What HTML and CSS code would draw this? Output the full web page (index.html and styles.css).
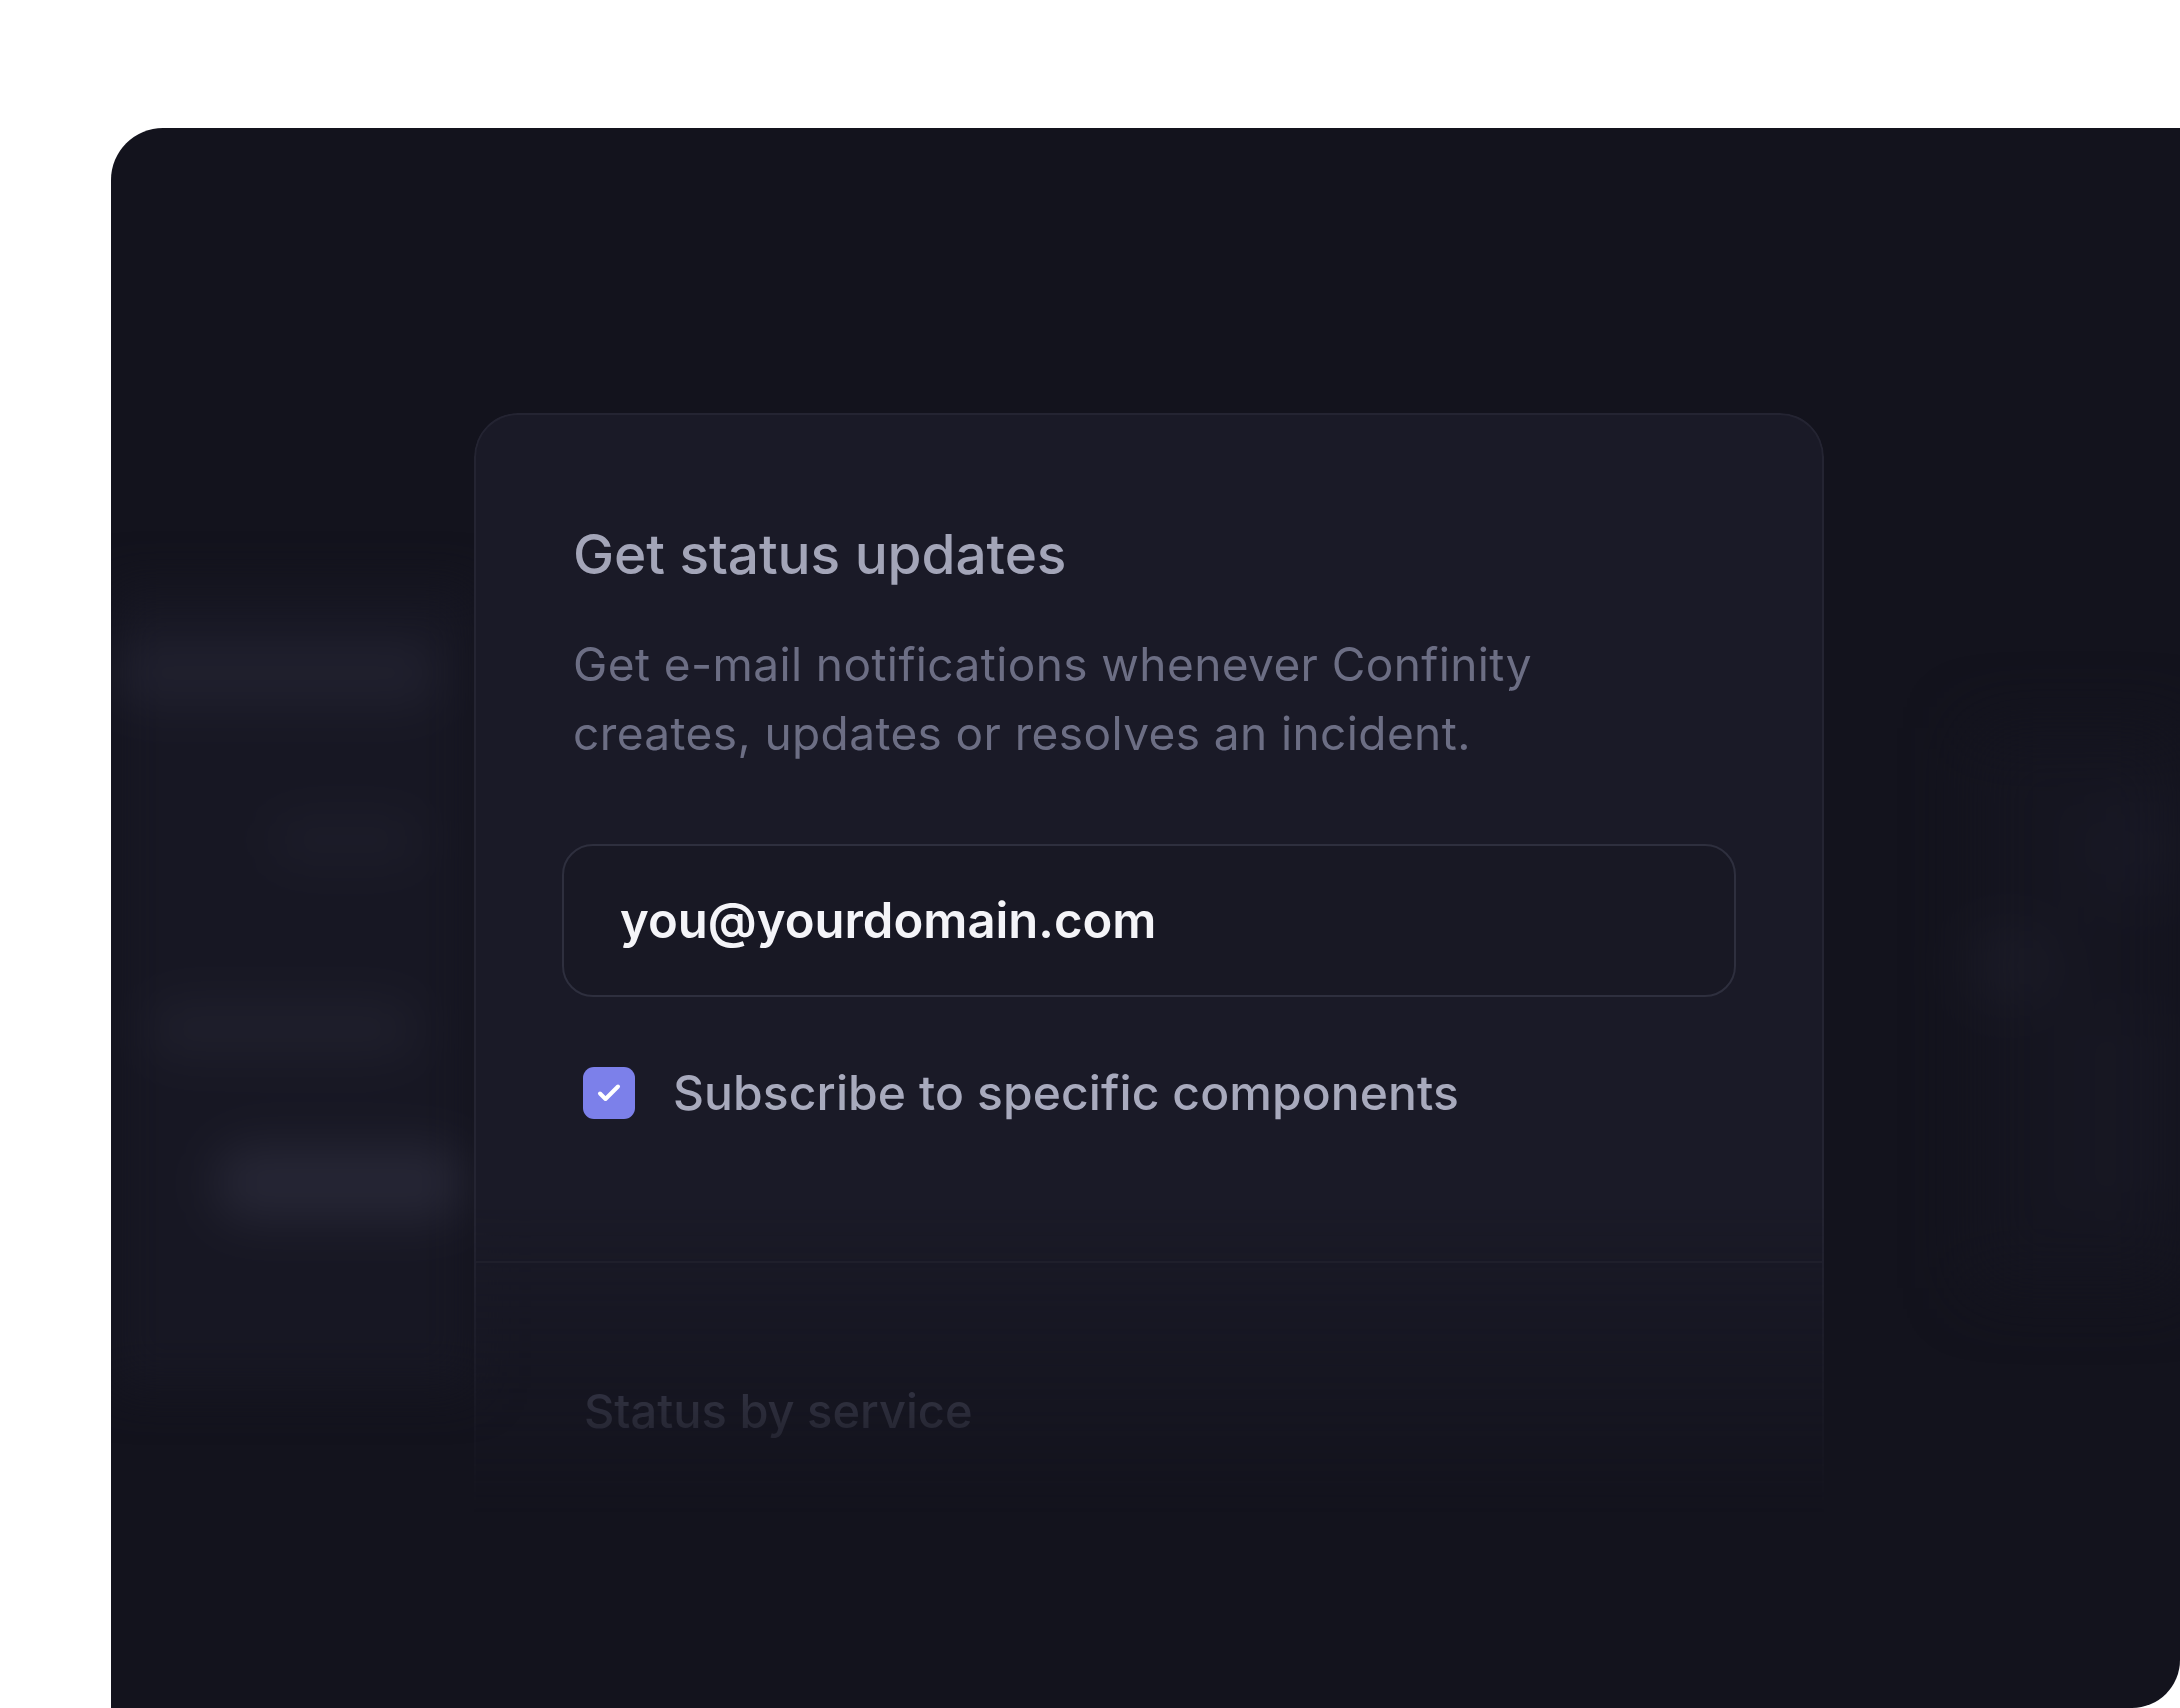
FILE: index.html
```html
<!DOCTYPE html>
<html lang="en">
<head>
<meta charset="utf-8">
<title>Get status updates</title>
<link rel="stylesheet" href="styles.css">
</head>
<body>
<div class="stage">
  <div class="panel">
    <div class="ghost ghost-left">
      <div class="haze haze-left">
        <div class="gbar gl1"></div>
        <div class="gbar gl2"></div>
        <div class="gbar gl3"></div>
        <div class="gbar gl4"></div>
      </div>
    </div>

    <section class="card">
      <h2 class="title">Get status updates</h2>
      <p class="desc">Get e-mail notifications whenever Confinity creates, updates or resolves an incident.</p>
      <input class="email" type="email" value="you@yourdomain.com" aria-label="Email">
      <label class="check-row">
        <span class="checkbox">
          <svg viewBox="0 0 52 52" width="52" height="52" aria-hidden="true">
            <path d="M17 26.5 L22.5 32 L35 19.5" fill="none" stroke="#ffffff" stroke-width="4" stroke-linecap="round" stroke-linejoin="round"/>
          </svg>
        </span>
        <span class="check-label">Subscribe to specific components</span>
      </label>
      <div class="divider"></div>
      <h3 class="section-title">Status by service</h3>
    </section>

    <div class="ghost ghost-right">
      <div class="haze haze-right">
        <div class="gbar gr1"></div>
        <div class="gbar gr2"></div>
        <div class="gbar gr3"></div>
      </div>
    </div>
  </div>
</div>
</body>
</html>
```
FILE: styles.css
```css
* { box-sizing: border-box; }

html, body {
  margin: 0;
  padding: 0;
}

body {
  background: #ffffff;
  width: 2180px;
  height: 1708px;
  overflow: hidden;
  font-family: Inter, "Noto Sans", "Liberation Sans", sans-serif;
}

.stage {
  padding: 128px 0 0 111px;
  height: 1708px;
}

.panel {
  width: 2069px;
  height: 1580px;
  background: #13131d;
  border-radius: 52px 0 48px 0;
  display: flex;
  align-items: flex-start;
  overflow: hidden;
}

/* blurred background content on both sides of the card */
.ghost {
  flex: none;
  filter: blur(24px);
}

.ghost-left { width: 363px; padding-top: 460px; }
.ghost-right { width: 356px; padding-top: 600px; padding-left: 150px; filter: blur(32px); }

.haze {
  display: flex;
  flex-direction: column;
  align-items: flex-start;
}

.haze-left {
  height: 800px;
  background: #171723;
  padding-top: 52px;
}

.haze-right {
  height: 560px;
  background: #151520;
  padding-top: 70px;
}

.gbar { flex: none; border-radius: 30px; }

.gl1 { margin-left: 0;     width: 330px; height: 66px; background: #20202e; }
.gl2 { margin-left: 160px; width: 150px; height: 44px; margin-top: 112px; background: #1d1d2a; }
.gl3 { margin-left: 36px;  width: 270px; height: 54px; margin-top: 140px; background: #1f1f2c; }
.gl4 { margin-left: 105px; width: 250px; height: 74px; margin-top: 90px;  background: #262635; }

.gr1 { margin-left: 120px; width: 86px;  height: 100px; background: #191926; }
.gr2 { margin-left: 0;     width: 70px;  height: 56px;  margin-top: 40px; background: #20202d; }
.gr3 { margin-left: 100px; width: 106px; height: 200px; margin-top: 20px; background: #171723; }

/* card */
.card {
  flex: none;
  width: 1350px;
  height: 1100px;
  margin-top: 285px;
  background: #1a1a27;
  border: 2px solid #242432;
  border-bottom: none;
  border-radius: 44px 44px 0 0;
  padding: 106px 86px 0;
  -webkit-mask-image: linear-gradient(to bottom, #000 0, #000 72%, transparent 100%);
  mask-image: linear-gradient(to bottom, #000 0, #000 72%, transparent 100%);
}

.title {
  margin: 0 0 43px 11px;
  font-size: 55px;
  line-height: 66px;
  font-weight: 500;
  color: #a3a5b8;
  letter-spacing: -0.1px;
}

.desc {
  margin: 0 0 76px 11px;
  max-width: 1040px;
  font-size: 46px;
  line-height: 69px;
  font-weight: 400;
  letter-spacing: 0.4px;
  color: #6c6e84;
}

.email {
  display: block;
  width: 100%;
  height: 153px;
  margin: 0;
  padding: 0 0 0 56px;
  border: 2px solid #2e2f3e;
  border-radius: 31px;
  background: #181824;
  color: #f4f4f8;
  font-family: inherit;
  font-size: 49px;
  font-weight: 600;
  outline: none;
}

.check-row {
  display: flex;
  align-items: center;
  gap: 38px;
  margin: 66px 0 0 21px;
}

.checkbox {
  flex: none;
  width: 52px;
  height: 52px;
  border-radius: 11px;
  background: #7c80ea;
  display: flex;
}

.check-label {
  font-size: 48px;
  line-height: 60px;
  font-weight: 500;
  letter-spacing: 0.1px;
  color: #a8aabd;
}

.divider {
  height: 2px;
  margin: 138px -86px 0;
  background: #22222f;
}

.section-title {
  margin: 120px 0 0 22px;
  font-size: 47px;
  line-height: 56px;
  font-weight: 500;
  color: #5d5f75;
}
```
